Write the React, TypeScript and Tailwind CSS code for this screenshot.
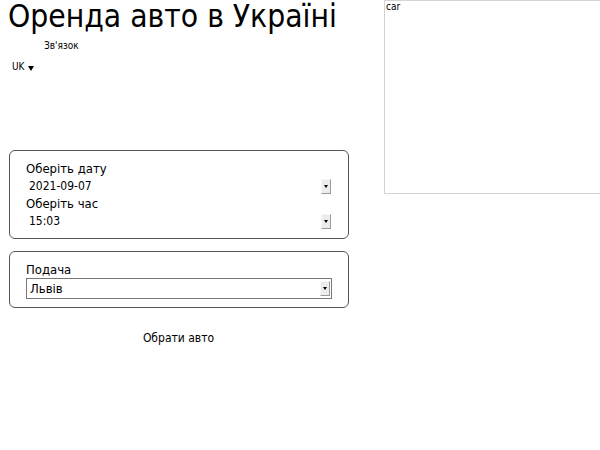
import React from "react";

function Arrow() {
  return (
    <div className="w-[10px] h-[15px] flex items-center justify-center bg-[#ececec] border-r border-b border-[#9a9a9a] border-l border-t border-l-[#f8f8f8] border-t-[#f8f8f8]">
      <div className="w-0 h-0 border-l-[2.5px] border-r-[2.5px] border-t-[3px] border-l-transparent border-r-transparent border-t-black" />
    </div>
  );
}

export default function App() {
  return (
    <div className="w-[600px] h-[450px] bg-white text-black relative overflow-hidden" style={{ fontFamily: '"DejaVu Sans Condensed", "DejaVu Sans", sans-serif' }}>
      <div className="flex">
        <div className="w-[384px] shrink-0">
          <h1 className="text-[31.5px] leading-[38px] pl-[8px] mt-[-3px] font-normal whitespace-nowrap">Оренда авто в Україні</h1>
          <div className="text-[10px] leading-[12px] pl-[44px] mt-[5px]">Зв'язок</div>
          <div className="text-[10px] leading-[12px] pl-[12px] mt-[9px] flex items-center gap-[3px]">
            UK
            <span className="inline-block w-0 h-0 border-l-[3px] border-r-[3px] border-t-[5px] border-l-transparent border-r-transparent border-t-black mt-[2px]" />
          </div>
        </div>
        <div className="flex-1 h-[194px] border border-[#d4d4d4] border-r-0 text-[10px] leading-[12px] px-[1px]">car</div>
      </div>

      <div className="mt-[-44px] ml-[9px] w-[340px] border border-[#555] rounded-[6px] pl-[16px] pr-[17px] pt-[9px] pb-[8px] text-[13px]">
        <div className="leading-[17px]">Оберіть дату</div>
        <div className="flex items-center justify-between h-[18px] pl-[3px]">
          <span className="text-[12px]">2021-09-07</span>
          <Arrow />
        </div>
        <div className="leading-[17px]">Оберіть час</div>
        <div className="flex items-center justify-between h-[18px] pl-[3px]">
          <span className="text-[12px]">15:03</span>
          <Arrow />
        </div>
      </div>

      <div className="mt-[12px] ml-[9px] w-[340px] border border-[#555] rounded-[6px] pl-[16px] pr-[16px] pt-[10px] pb-[8px] text-[13px]">
        <div className="leading-[16px]">Подача</div>
        <div className="flex items-center justify-between h-[21px] border border-[#777] pl-[3px] pr-[1px]">
          <span>Львів</span>
          <Arrow />
        </div>
      </div>

      <div className="w-[357px] text-center text-[12px] mt-[21px]">Обрати авто</div>
    </div>
  );
}
